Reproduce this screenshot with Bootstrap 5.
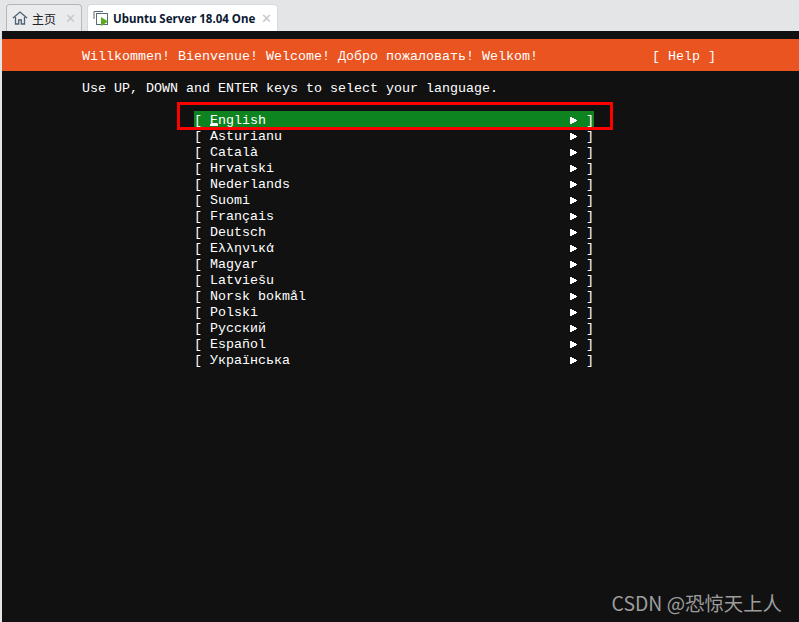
<!DOCTYPE html>
<html lang="en">
<head>
<meta charset="utf-8">
<title>Ubuntu Server 18.04 One</title>
<link href="https://cdn.jsdelivr.net/npm/bootstrap@5.3.0/dist/css/bootstrap.min.css" rel="stylesheet">
<style>
html,body{height:100%;margin:0;overflow:hidden;background:#e4e5e7}
.app-shell{width:799px;height:622px}
.tabbar{height:31px;padding:4px 0 0 6px;gap:5px;background:#e4e5e7}
.vm-tab{height:27px;border:1px solid #b4b8bc;border-bottom:0;border-radius:4px 4px 0 0;background:#eaebed;font:12px "Noto Sans CJK SC","Liberation Sans",sans-serif;color:#222;white-space:nowrap}
.tab-home{width:76px;padding-left:5px}
.tab-vm{width:191px;padding-left:5px;background:#fff;border-color:#d8dadc;font:bold 11.5px "Noto Sans",sans-serif;color:#0b1a33}
.tab-x{color:#c4c6c9;font:bold 13px "DejaVu Sans",sans-serif;margin-left:auto;margin-right:5px}
.console{height:591px;margin-left:2px;background:#111;color:#fff;font:13.33px/16px "Liberation Mono",monospace;padding-top:8px;position:relative}
.banner{height:32px;background:#e95420;padding:10px 0 0 80px;white-space:pre}
.help-btn{margin-left:114px}
.prompt{padding:10px 0 0 80px;height:40px;white-space:pre}
.lang-list{margin-left:192px;width:400px}
.lang-row{height:16px;white-space:pre;line-height:16px}
.lang-row>span{padding-top:2px}
.lang-row.active-row{background:#0e8420}
.cursor-char{display:inline-block;position:relative}
.cursor-char::after{content:"";position:absolute;left:0;right:0;top:11px;height:2px;background:#fff}
.arrow-cell{display:inline-block;width:8px}
.arrow-cell svg{display:inline-block;vertical-align:0}
.close-bracket{margin-left:8px}
.red-frame{position:absolute;left:175px;top:71px;width:436px;height:28px;border:3px solid #f00;pointer-events:none}
.watermark{position:absolute;right:17px;bottom:7px;font:19.4px/24px "Noto Sans CJK SC","Noto Sans",sans-serif;color:#9d9d9d}
</style>
</head>
<body>
<div class="app-shell d-flex flex-column">
  <div class="tabbar d-flex">
    <div class="vm-tab tab-home d-flex align-items-center">
      <svg width="16" height="16" viewBox="0 0 16 16" fill="none" stroke="#4f6272" stroke-width="1.3"><path d="M1 8 8 2l7 6M3.500 7v7h3.200v-4h2.600v4h3.200V7"/></svg>
      <span class="ms-1">主页</span>
      <span class="tab-x">✕</span>
    </div>
    <div class="vm-tab tab-vm d-flex align-items-center">
      <svg width="16" height="16" viewBox="0 0 16 16" fill="none"><path d="M1 9V1.500h9" stroke="#5a6a78"/><rect x="3.500" y="3.500" width="11" height="11" fill="#fff" stroke="#5a6a78"/><path d="M8 7l7 4.500-7 4.500z" fill="#5bab1e"/></svg>
      <span class="ms-1">Ubuntu Server 18.04 One</span>
      <span class="tab-x">✕</span>
    </div>
  </div>
  <main class="console">
    <div class="banner">Willkommen! Bienvenue! Welcome! Добро пожаловать! Welkom!<span class="help-btn">[ Help ]</span></div>
    <div class="prompt">Use UP, DOWN and ENTER keys to select your language.</div>
    <div class="lang-list" id="langs"></div>
    <div class="red-frame"></div>
    <div class="watermark">CSDN @恐惊天上人</div>
  </main>
</div>
<script>
const names=["English","Asturianu","Català","Hrvatski","Nederlands","Suomi","Français","Deutsch","Ελληνικά","Magyar","Latviešu","Norsk bokmål","Polski","Русский","Español","Українська"];
const arrow='<span class="arrow-cell"><svg width="7" height="7" viewBox="0 0 7 7"><path d="M0 0h2v1h2v1h2v1h1v1H6v1H4v1H2v1H0z" fill="#fff"/></svg></span>';
document.getElementById('langs').innerHTML=names.map((n,i)=>{
  const label=i===0?'<span class="cursor-char">E</span>nglish':n;
  return `<div class="lang-row d-flex justify-content-between${i===0?' active-row':''}"><span>[ ${label}</span><span>${arrow}<span class="close-bracket">]</span></span></div>`;
}).join('');
</script>
<script src="https://cdn.jsdelivr.net/npm/bootstrap@5.3.0/dist/js/bootstrap.bundle.min.js"></script>
</body>
</html>
